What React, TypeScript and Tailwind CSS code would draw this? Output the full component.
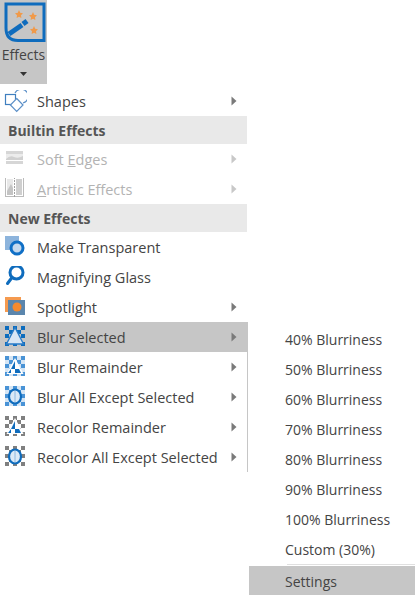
import type { ReactNode } from 'react'

const font = { fontFamily: '"Open Sans", sans-serif' }

const Arrow = ({ light }: { light?: boolean }) => (
  <svg width="6" height="10" viewBox="0 0 6 10" className="absolute left-[231px] top-1/2 -translate-y-1/2">
    <path d="M0.5 0.5 L5.5 5 L0.5 9.5 Z" fill={light ? '#c8c8c8' : '#7a7a7a'} />
  </svg>
)

// 5x5 board behind the blur and recolor icons
const Checker = ({ color, soft }: { color: string; soft?: boolean }) => (
  <g filter={soft ? 'url(#soft)' : undefined}>
    {[0, 1, 2, 3, 4].map((x) =>
      [0, 1, 2, 3, 4].map((y) =>
        (x + y) % 2 === 0 ? <rect key={`${x}-${y}`} x={2 + x * 4} y={y * 4} width="4" height="4" fill={color} /> : null,
      ),
    )}
  </g>
)

const Tri = ({ fill }: { fill: string }) => (
  <g>
    <path d="M12 2 L20.5 18 H3.5 Z" fill="#fff" />
    <path d="M12 5 L8 13 H12 Z M12 13 H16 L18 17 H12 Z M8 13 V17 H5 Z" fill={fill} />
  </g>
)

const Oval = () => (
  <>
    <ellipse cx="12" cy="10.5" rx="6" ry="7" fill="#dbe9f6" stroke="#0f6cbd" strokeWidth="2.2" />
    <path d="M12 5 V16" stroke="#8db8e0" strokeWidth="1" />
  </>
)

const Star = ({ x, y }: { x: number; y: number }) => (
  <path
    transform={`translate(${x} ${y}) scale(0.8)`}
    d="M0 -5 L1.5 -1.5 L5 -1 L2.5 1.5 L3 5 L0 3.3 L-3 5 L-2.5 1.5 L-5 -1 L-1.5 -1.5 Z"
    fill="#f09a4a"
  />
)

const Icon = ({ children }: { children: ReactNode }) => (
  <svg width="24" height="24" viewBox="0 0 24 24" fill="none" className="ml-[3px]">
    {children}
  </svg>
)

const icons: Record<string, ReactNode> = {
  shapes: (
    <Icon>
      <path d="M12 3 A7 7 0 1 1 20 13" stroke="#5b8fc7" strokeWidth="1.2" />
      <rect x="2.5" y="4.5" width="10" height="10" stroke="#3f7fbf" strokeWidth="1.2" />
      <path d="M13.7 8.5 L20 15 L13.7 21.5 L7.4 15 Z" fill="#fff" stroke="#5b8fc7" strokeWidth="1.2" />
    </Icon>
  ),
  soft: (
    <Icon>
      <rect x="3" y="3" width="17" height="3" fill="#d6d6d6" />
      <rect x="3" y="6" width="17" height="6" fill="#ececec" />
      <path d="M3 11 Q7 7 11 9 T20 8 V12 H3 Z" fill="#d0d0d0" />
      <rect x="3" y="13" width="17" height="3" fill="#d6d6d6" />
    </Icon>
  ),
  artistic: (
    <Icon>
      <rect x="2.5" y="-0.5" width="18" height="19" stroke="#bbb" />
      <rect x="4" y="1" width="6" height="16" fill="#e8e8e8" />
      <path d="M4 13 L8 6 L10 10 V17 H4 Z" fill="#c4c4c4" />
      <rect x="13" y="1" width="6" height="16" fill="#cfcfcf" />
      <path d="M11.5 -1 V20" stroke="#a0a0a0" strokeDasharray="2 1" />
    </Icon>
  ),
  transparent: (
    <Icon>
      <rect x="2" y="0" width="14" height="14" fill="#8db4dc" />
      <circle cx="14" cy="12" r="6" stroke="#0f6fc6" strokeWidth="3" fill="#c5d9ee" />
    </Icon>
  ),
  magnify: (
    <Icon>
      <circle cx="13.5" cy="6.5" r="6.5" stroke="#0f6cbd" strokeWidth="3" />
      <path d="M9 11.5 L4.5 17.5" stroke="#0f6cbd" strokeWidth="3" strokeLinecap="round" />
    </Icon>
  ),
  spotlight: (
    <Icon>
      <rect x="2" y="1" width="16" height="15" fill="#f59a4f" />
      <rect x="5" y="4" width="17" height="15" fill="#5b86ad" />
      <circle cx="14" cy="11" r="4.5" fill="#f58a2e" />
    </Icon>
  ),
  blurSel: (
    <Icon>
      <Checker color="#0f6cbd" soft />
      <path d="M12 1.5 L20.5 18 H3.5 Z" fill="#d8e6f4" stroke="#2a7cc7" strokeWidth="1.4" />
    </Icon>
  ),
  blurRem: (
    <Icon>
      <rect x="2" y="0" width="20" height="20" fill="#d5e5f4" />
      <Checker color="#4a93d6" soft />
      <Tri fill="#0f6cbd" />
    </Icon>
  ),
  blurAll: (
    <Icon>
      <rect x="2" y="0" width="20" height="20" fill="#d5e5f4" />
      <Checker color="#4a93d6" soft />
      <Oval />
    </Icon>
  ),
  recRem: (
    <Icon>
      <Checker color="#808080" />
      <Tri fill="#0f6cbd" />
    </Icon>
  ),
  recAll: (
    <Icon>
      <Checker color="#808080" />
      <Oval />
    </Icon>
  ),
}

function Row({ icon, label, arrow, disabled, active }: { icon: string; label: ReactNode; arrow?: boolean; disabled?: boolean; active?: boolean }) {
  return (
    <div className={`relative flex h-[30px] items-center ${active ? 'bg-[#c6c6c6]' : ''}`}>
      <span className="flex w-[37px] shrink-0 items-center pt-[2px]">{icons[icon]}</span>
      <span className={`whitespace-nowrap pt-[2px] text-[14.5px] ${disabled ? 'text-[#b3b3b3]' : 'text-[#444]'}`}>{label}</span>
      {arrow && <Arrow light={disabled} />}
    </div>
  )
}

const Section = ({ title }: { title: string }) => (
  <div className="flex h-[28px] w-[247px] items-center bg-[#e9e9e9] pl-[8px] text-[14px] font-bold text-[#555]">{title}</div>
)

const SubRow = ({ label }: { label: string }) => (
  <div className="flex h-[30px] items-center pl-[36px] text-[14px] text-[#444]">{label}</div>
)

const blur = ['40%', '50%', '60%', '70%', '80%', '90%', '100%']

export default function App() {
  return (
    <div className="flex h-[595px] w-[415px] overflow-hidden bg-white" style={font}>
      <svg width="0" height="0" className="absolute">
        <filter id="soft">
          <feGaussianBlur stdDeviation="0.6" />
        </filter>
      </svg>
      <div className="w-[249px] shrink-0">
        <div className="flex h-[84px] w-[47px] flex-col items-center bg-[#c6c6c6]">
          <svg width="44" height="42" viewBox="0 0 44 42" className="mt-[1px] shrink-0" fill="none">
            <path d="M4 3 H42 V39.5 H16 Q4 39.5 4 27 Z" stroke="#0f6cbd" strokeWidth="3" />
            <path d="M7 33 L20 24" stroke="#0f6cbd" strokeWidth="5" />
            <path d="M21 23 L25 20" stroke="#0f6cbd" strokeWidth="5" />
            <Star x={17} y={13} />
            <Star x={31} y={15} />
            <Star x={32} y={29} />
          </svg>
          <span className="mt-[2px] text-[14px] leading-[20px] text-[#444]">Effects</span>
          <svg width="8" height="4" viewBox="0 0 8 4" className="mt-[7px]">
            <path d="M0 0 H7 L3.5 4 Z" fill="#333" />
          </svg>
        </div>
        <div className="w-[248px] pt-[2px]">
          <Row icon="shapes" label="Shapes" arrow />
          <Section title="Builtin Effects" />
          <Row icon="soft" label={<>Soft <u>E</u>dges</>} arrow disabled />
          <Row icon="artistic" label={<><u>A</u>rtistic Effects</>} arrow disabled />
          <Section title="New Effects" />
          <Row icon="transparent" label="Make Transparent" />
          <Row icon="magnify" label="Magnifying Glass" />
          <Row icon="spotlight" label="Spotlight" arrow />
          <Row icon="blurSel" label="Blur Selected" arrow active />
          <div className="border-r border-[#c6c6c6]">
            <Row icon="blurRem" label="Blur Remainder" arrow />
            <Row icon="blurAll" label="Blur All Except Selected" arrow />
            <Row icon="recRem" label="Recolor Remainder" arrow />
            <Row icon="recAll" label="Recolor All Except Selected" arrow />
          </div>
        </div>
      </div>
      <div className="flex-1 pt-[324px]">
        {blur.map((b) => (
          <SubRow key={b} label={`${b} Blurriness`} />
        ))}
        <SubRow label="Custom (30%)" />
        <div className="mb-px ml-[38px] h-px bg-[#e0e0e0]" />
        <div className="flex h-[29px] items-center bg-[#c6c6c6] pl-[36px] pt-[1px] text-[14px] text-[#444]">Settings</div>
      </div>
    </div>
  )
}
